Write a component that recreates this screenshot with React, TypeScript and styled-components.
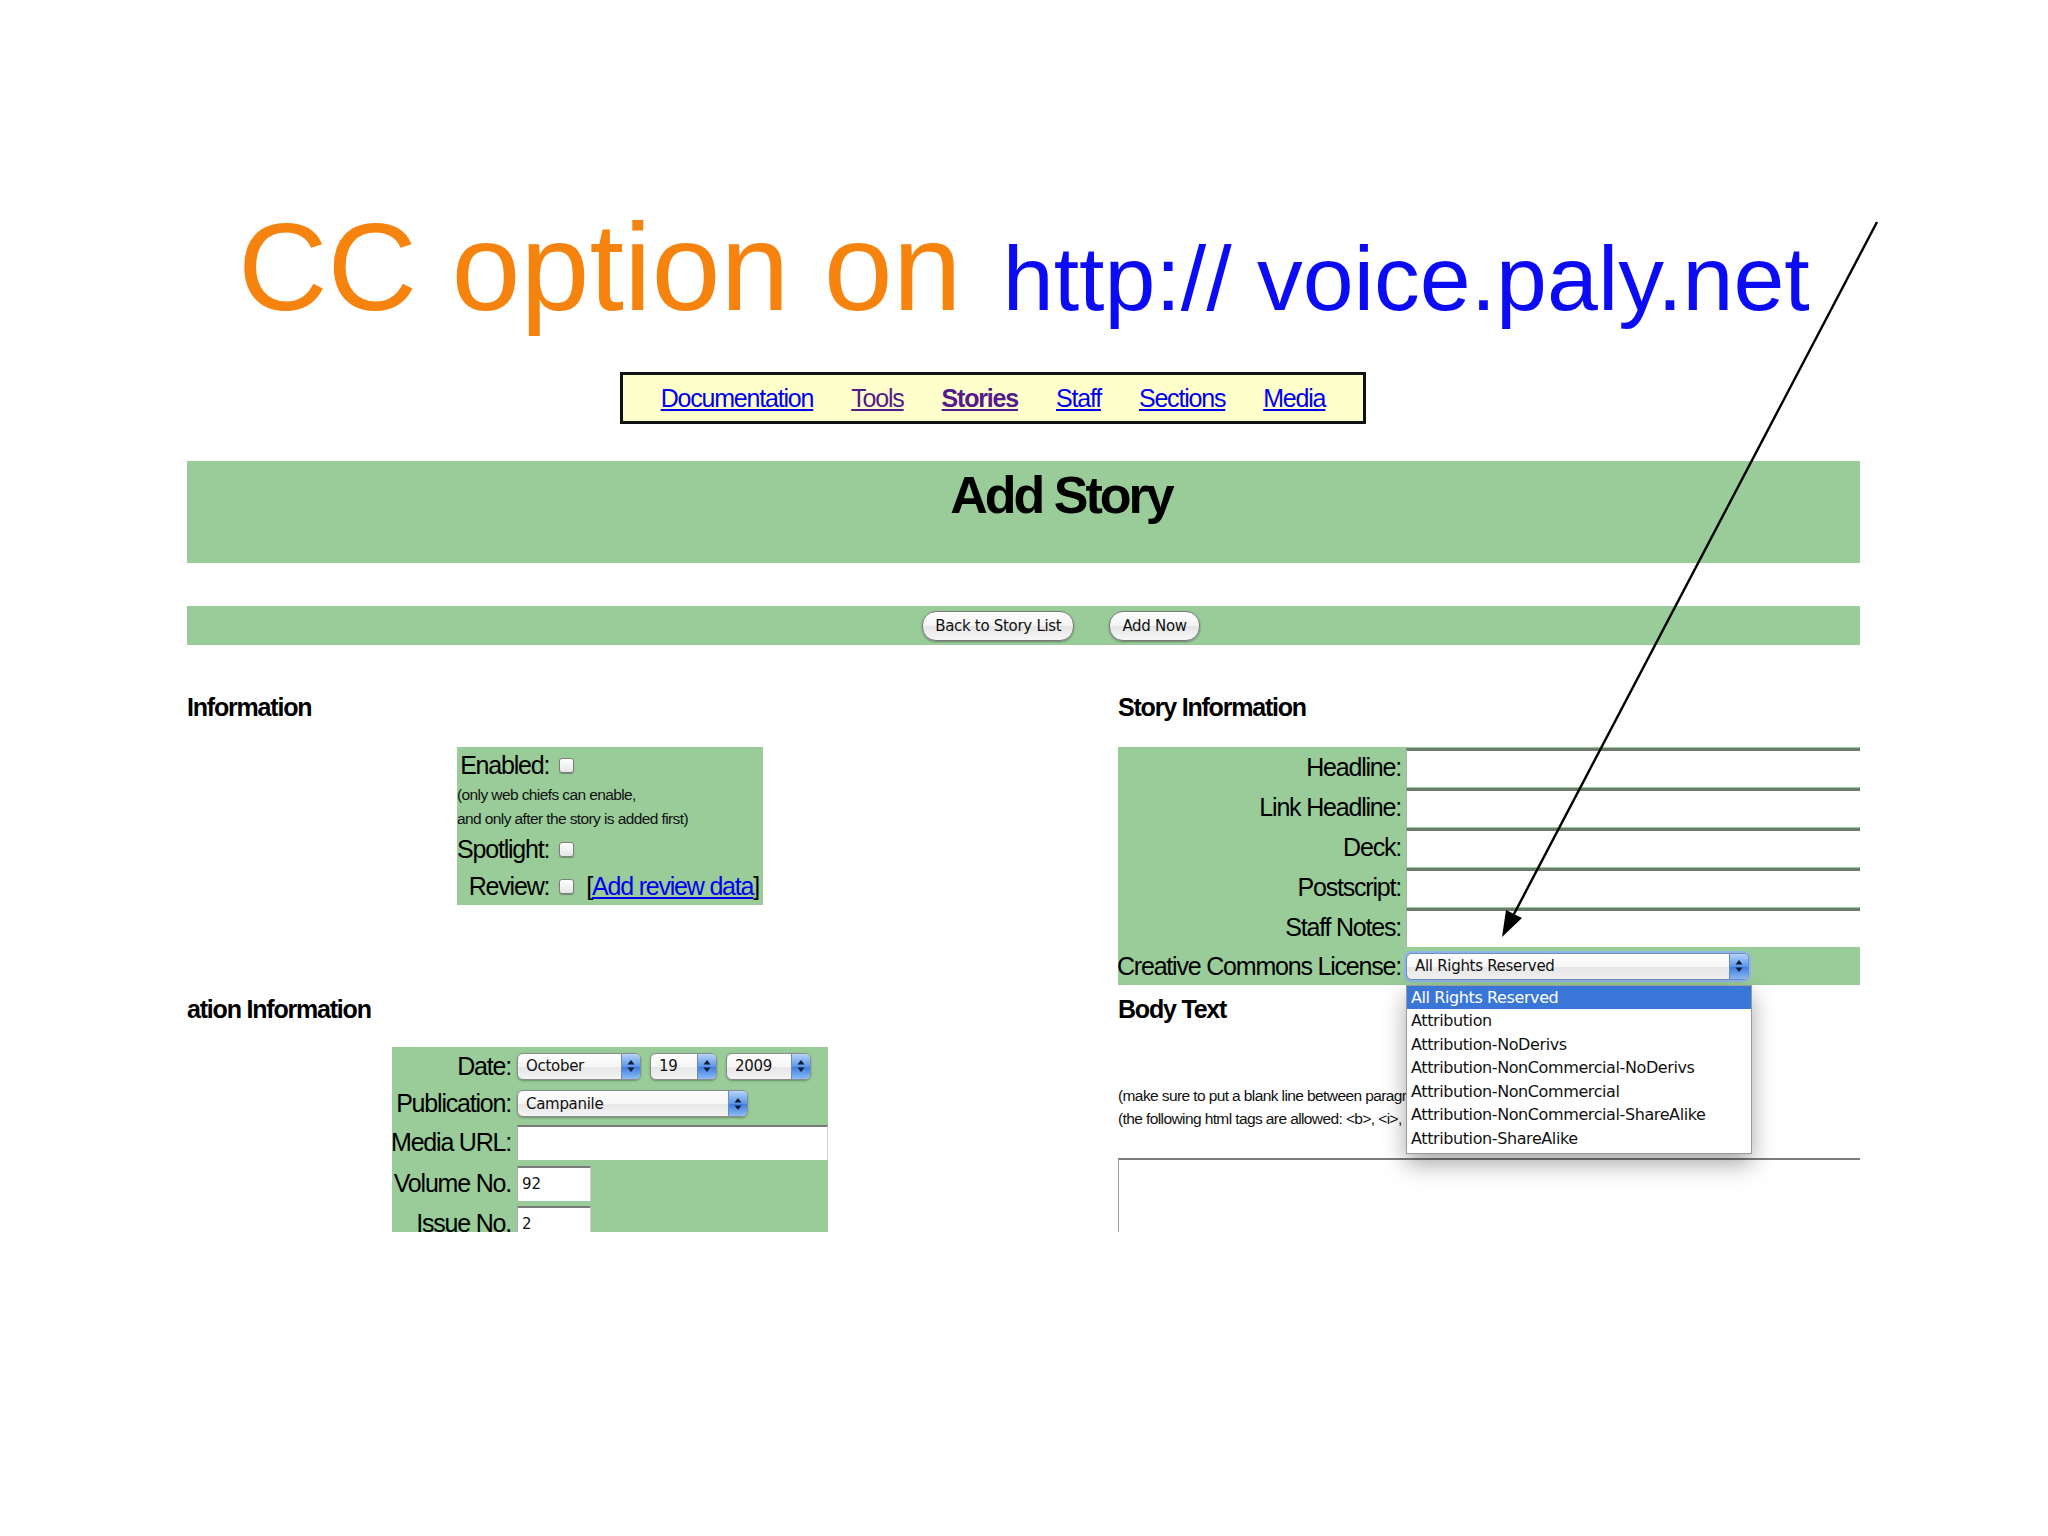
import styled, { createGlobalStyle } from 'styled-components';

// the page in the slide is a squeezed screenshot, so its text runs tight
const SANS = `"Liberation Sans", Arial, sans-serif`;
const AQUA = `"DejaVu Sans", "Liberation Sans", sans-serif`;
const GREEN = '#99cc99';

const GlobalStyle = createGlobalStyle`
  body {
    margin: 0;
    background: #ffffff;
  }
`;

const Page = styled.div`
  position: relative;
  width: 2048px;
  height: 1536px;
  overflow: hidden;
  background: #ffffff;
  font-family: ${SANS};
`;

const TitleRow = styled.h1`
  margin: 0;
  padding: 205px 0 0 238px;
  display: flex;
  align-items: baseline;
  gap: 41px;
  line-height: 1;
  font-weight: normal;
  white-space: nowrap;
`;

const TitleMain = styled.span`
  color: #f7830f;
  font-size: 124px;
`;

const TitleUrl = styled.span`
  color: #0b0bf4;
  font-size: 91.5px;
`;

const NavBox = styled.nav`
  margin: 43px 0 0 620px;
  width: 746px;
  height: 52px;
  box-sizing: border-box;
  border: 3px solid #111;
  background: #ffffcc;

  display: flex;
  align-items: center;
  justify-content: center;
  gap: 38px;

  font-size: 25px;
  letter-spacing: -1.2px;
`;

const NavLink = styled.a<{ $visited?: boolean; $current?: boolean }>`
  color: ${({ $visited }) => ($visited ? '#551a8b' : '#0000ee')};
  font-weight: ${({ $current }) => ($current ? 'bold' : 'normal')};
  text-decoration: underline;
`;

const Screen = styled.div`
  margin: 37px 0 0 187px;
  width: 1673px;
  height: 771px;
  overflow: hidden;
`;

const HeaderBar = styled.div`
  height: 102px;
  box-sizing: border-box;
  padding: 8px 0 0 75px;
  background: ${GREEN};
  text-align: center;
`;

const PageHeading = styled.h2`
  margin: 0;
  font-size: 52px;
  font-weight: bold;
  letter-spacing: -3px;
  line-height: 1;
  color: #000;
`;

const ButtonBar = styled.div`
  margin-top: 43px;
  height: 39px;
  padding-left: 75px;
  background: ${GREEN};

  display: flex;
  align-items: center;
  justify-content: center;
  gap: 35px;
`;

const AquaButton = styled.button`
  height: 30px;
  padding: 0 12px;
  border: 1px solid #7a7a7a;
  border-radius: 14px;
  background: linear-gradient(#ffffff, #f4f4f4 50%, #e4e4e4 51%, #f7f7f7);
  box-shadow: 0 1px 2px rgba(0, 0, 0, 0.35);
  font-family: ${AQUA};
  font-size: 15px;
  letter-spacing: -0.3px;
  color: #111;
`;

const Columns = styled.div`
  margin-top: 49px;
  display: grid;
  grid-template-columns: 931px 742px;
`;

const Column = styled.div`
  display: flex;
  flex-direction: column;
  align-items: flex-start;
`;

const SectionHeading = styled.h3<{ $gap?: number }>`
  margin: ${({ $gap }) => $gap ?? 0}px 0 0 0;
  font-size: 25px;
  font-weight: bold;
  letter-spacing: -1.2px;
  line-height: 27px;
  color: #000;
`;

const FlagsBox = styled.div`
  margin: 26px 0 0 270px;
  width: 306px;
  height: 158px;
  background: ${GREEN};

  display: grid;
  grid-template-columns: auto 1fr;
  grid-template-rows: 36px 24px 24px 37px 37px;
  align-items: center;
`;

const Label = styled.span`
  justify-self: end;
  font-size: 25px;
  letter-spacing: -1.2px;
  line-height: 1;
  color: #000;
  white-space: nowrap;
`;

const Control = styled.div<{ $gap?: number }>`
  display: flex;
  align-items: center;
  gap: ${({ $gap }) => $gap ?? 8}px;
  padding-left: 6px;
`;

const Checkbox = styled.span`
  width: 15px;
  height: 15px;
  flex: none;
  box-sizing: border-box;
  margin-left: 4px;
  border: 1px solid #7e7e7e;
  border-radius: 3px;
  background: linear-gradient(#ffffff, #e6e6e6);
  box-shadow: 0 1px 1px rgba(0, 0, 0, 0.3);
`;

const Note = styled.span`
  grid-column: 1 / span 2;
  font-size: 15.5px;
  letter-spacing: -0.6px;
  line-height: 24px;
  color: #111;
  white-space: nowrap;
`;

const Bracketed = styled.span`
  font-size: 25px;
  letter-spacing: -1.2px;
  color: #000;
  white-space: nowrap;

  a {
    color: #0000ee;
    text-decoration: underline;
  }
`;

const PublishBox = styled.div`
  margin: 24px 0 0 205px;
  width: 436px;
  height: 200px;
  background: ${GREEN};

  display: grid;
  grid-template-columns: 119px 1fr;
  grid-template-rows: 38px 37px 41px 40px 40px;
  align-items: center;
`;

const Select = styled.div<{ $width: number; $focus?: boolean }>`
  width: ${({ $width }) => $width}px;
  height: 27px;
  box-sizing: border-box;
  display: flex;
  align-items: stretch;
  border: 1px solid ${({ $focus }) => ($focus ? '#6f8fbf' : '#8c8c8c')};
  border-radius: 6px;
  background: linear-gradient(#ffffff, #f6f6f6 50%, #e6e6e6 51%, #f4f4f4);
  box-shadow: ${({ $focus }) =>
    $focus ? '0 0 0 2px #8eb4ea, 0 1px 2px rgba(0,0,0,.3)' : '0 1px 2px rgba(0, 0, 0, 0.3)'};
  overflow: hidden;
  font-family: ${AQUA};
  font-size: 15px;
  letter-spacing: -0.3px;
  color: #111;
`;

const SelectText = styled.span`
  flex: 1;
  display: flex;
  align-items: center;
  padding-left: 8px;
  white-space: nowrap;
`;

const SelectCap = styled.span`
  width: 18px;
  display: flex;
  align-items: center;
  justify-content: center;
  border-left: 1px solid #6b8cc4;
  background: linear-gradient(#b5d4f8, #5d97ea 50%, #3b7be0 51%, #8cbcf4);
`;

const TextBox = styled.div<{ $width: number }>`
  width: ${({ $width }) => $width}px;
  height: 35px;
  box-sizing: border-box;
  padding: 7px 4px 0;
  border-top: 2px solid #7a7a7a;
  border-left: 1px solid #b0b0b0;
  border-right: 1px solid #d0d0d0;
  background: #ffffff;
  font-family: ${AQUA};
  font-size: 15px;
  color: #111;
`;

const StoryTable = styled.div`
  margin-top: 26px;
  width: 742px;
  background: ${GREEN};

  display: grid;
  grid-template-columns: 283px 1fr;
  grid-template-rows: repeat(5, 40px) 38px;
  align-items: center;
`;

const StoryField = styled.div`
  align-self: start;
  margin: 1px 0 0 5px;
  height: 36px;
  border-top: 3px solid #6e7a6e;
  border-left: 1px solid #a8b8a8;
  background: #ffffff;
`;

const SelectAnchor = styled.div`
  position: relative;
  margin-left: 5px;
`;

const Dropdown = styled.ul`
  position: absolute;
  top: 32px;
  left: 0;
  z-index: 2;
  width: 344px;
  margin: 0;
  padding: 0 0 2px;
  list-style: none;
  border: 1px solid #9a9a9a;
  background: #ffffff;
  box-shadow: 0 10px 22px rgba(0, 0, 0, 0.35);
  font-family: ${AQUA};
  font-size: 16px;
  letter-spacing: -0.4px;
  color: #111;
`;

const Option = styled.li<{ $selected?: boolean }>`
  height: 23.6px;
  line-height: 23.6px;
  padding-left: 4px;
  white-space: nowrap;
  background: ${({ $selected }) => ($selected ? '#3a76d8' : 'transparent')};
  color: ${({ $selected }) => ($selected ? '#ffffff' : '#111')};
`;

const BodyNotes = styled.div`
  margin-top: 61px;
  font-size: 15.5px;
  letter-spacing: -0.6px;
  line-height: 23px;
  color: #111;
  white-space: nowrap;
`;

const BodyArea = styled.div`
  margin-top: 28px;
  width: 742px;
  height: 120px;
  box-sizing: border-box;
  border-top: 2px solid #7c7c7c;
  border-left: 1px solid #9c9c9c;
  background: #ffffff;
`;

const ArrowLayer = styled.svg`
  position: absolute;
  top: 0;
  left: 0;
  pointer-events: none;
`;

function Arrows() {
  return (
    <svg width="10" height="14" viewBox="0 0 10 14">
      <path d="M5 1 L8.5 5.5 H1.5 Z" fill="#0d1a33" />
      <path d="M5 13 L8.5 8.5 H1.5 Z" fill="#0d1a33" />
    </svg>
  );
}

function AquaSelect({ value, width, focus }: { value: string; width: number; focus?: boolean }) {
  return (
    <Select $width={width} $focus={focus}>
      <SelectText>{value}</SelectText>
      <SelectCap>
        <Arrows />
      </SelectCap>
    </Select>
  );
}

const licenses = [
  'All Rights Reserved',
  'Attribution',
  'Attribution-NoDerivs',
  'Attribution-NonCommercial-NoDerivs',
  'Attribution-NonCommercial',
  'Attribution-NonCommercial-ShareAlike',
  'Attribution-ShareAlike',
];

const storyFields = ['Headline:', 'Link Headline:', 'Deck:', 'Postscript:', 'Staff Notes:'];

function App() {
  return (
    <Page>
      <GlobalStyle />
      <TitleRow>
        <TitleMain>CC option on</TitleMain>
        <TitleUrl>http:// voice.paly.net</TitleUrl>
      </TitleRow>

      <NavBox>
        <NavLink href="#">Documentation</NavLink>
        <NavLink href="#" $visited>
          Tools
        </NavLink>
        <NavLink href="#" $visited $current>
          Stories
        </NavLink>
        <NavLink href="#">Staff</NavLink>
        <NavLink href="#">Sections</NavLink>
        <NavLink href="#">Media</NavLink>
      </NavBox>

      <Screen>
        <HeaderBar>
          <PageHeading>Add Story</PageHeading>
        </HeaderBar>
        <ButtonBar>
          <AquaButton>Back to Story List</AquaButton>
          <AquaButton>Add Now</AquaButton>
        </ButtonBar>

        <Columns>
          <Column>
            <SectionHeading>Information</SectionHeading>
            <FlagsBox>
              <Label>Enabled:</Label>
              <Control>
                <Checkbox />
              </Control>
              <Note>(only web chiefs can enable,</Note>
              <Note>and only after the story is added first)</Note>
              <Label>Spotlight:</Label>
              <Control>
                <Checkbox />
              </Control>
              <Label>Review:</Label>
              <Control $gap={12}>
                <Checkbox />
                <Bracketed>
                  [<a href="#">Add review data</a>]
                </Bracketed>
              </Control>
            </FlagsBox>

            <SectionHeading $gap={91}>ation Information</SectionHeading>
            <PublishBox>
              <Label>Date:</Label>
              <Control $gap={9}>
                <AquaSelect value="October" width={124} />
                <AquaSelect value="19" width={67} />
                <AquaSelect value="2009" width={85} />
              </Control>
              <Label>Publication:</Label>
              <Control>
                <AquaSelect value="Campanile" width={231} />
              </Control>
              <Label>Media URL:</Label>
              <Control>
                <TextBox $width={311} />
              </Control>
              <Label>Volume No.</Label>
              <Control>
                <TextBox $width={74}>92</TextBox>
              </Control>
              <Label>Issue No.</Label>
              <Control>
                <TextBox $width={74}>2</TextBox>
              </Control>
            </PublishBox>
          </Column>

          <Column>
            <SectionHeading>Story Information</SectionHeading>
            <StoryTable>
              {storyFields.map((name) => (
                <>
                  <Label key={`l-${name}`}>{name}</Label>
                  <StoryField key={`f-${name}`} />
                </>
              ))}
              <Label>Creative Commons License:</Label>
              <SelectAnchor>
                <AquaSelect value="All Rights Reserved" width={343} focus />
                <Dropdown>
                  {licenses.map((item, i) => (
                    <Option key={item} $selected={i === 0}>
                      {item}
                    </Option>
                  ))}
                </Dropdown>
              </SelectAnchor>
            </StoryTable>

            <SectionHeading $gap={11}>Body Text</SectionHeading>
            <BodyNotes>
              <div>(make sure to put a blank line between paragraphs)</div>
              <div>(the following html tags are allowed: &lt;b&gt;, &lt;i&gt;, &lt;u&gt;, &lt;a&gt;)</div>
            </BodyNotes>
            <BodyArea />
          </Column>
        </Columns>
      </Screen>

      <ArrowLayer width="2048" height="1536" viewBox="0 0 2048 1536">
        <line x1="1877" y1="222" x2="1514" y2="914" stroke="#000" strokeWidth="2.4" />
        <polygon points="1502,937 1522,918 1506,910" fill="#000" />
      </ArrowLayer>
    </Page>
  );
}

export default App;
